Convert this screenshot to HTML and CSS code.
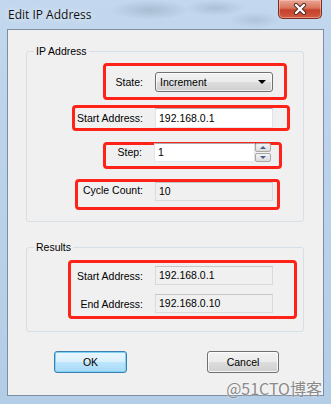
FILE: index.html
```html
<!DOCTYPE html>
<html lang="en">
<head>
    <meta charset="UTF-8">
    <meta name="viewport" content="width=device-width, initial-scale=1.0">
    <title>Edit IP Address</title>
    <link rel="stylesheet" href="styles.css">
</head>
<body>
    <div class="window">
        <div class="titlebar">
            <span class="title">Edit IP Address</span>
            <div class="close">
                <svg width="16" height="12" viewBox="0 0 16 12">
                    <path d="M4 2 L12 10 M12 2 L4 10" stroke="#4a2a22" stroke-width="4.2" stroke-linecap="round"/>
                    <path d="M4 2 L12 10 M12 2 L4 10" stroke="#ffffff" stroke-width="2.4" stroke-linecap="round"/>
                </svg>
            </div>
        </div>

        <div class="client">
            <div class="group group-ip">
                <div class="group-title">IP Address</div>

                <div class="mark mark-state">
                    <span class="label">State:</span>
                    <div class="combo">Increment<span class="arrow"></span></div>
                </div>

                <div class="mark mark-start">
                    <span class="label">Start Address:</span>
                    <div class="field">192.168.0.1</div>
                </div>

                <div class="mark mark-step">
                    <span class="label">Step:</span>
                    <div class="field field-step">1</div>
                    <div class="spin">
                        <span class="spin-btn"><span class="tri tri-up"></span></span>
                        <span class="spin-btn"><span class="tri tri-down"></span></span>
                    </div>
                </div>

                <div class="mark mark-cycle">
                    <span class="label">Cycle Count:</span>
                    <div class="field readonly">10</div>
                </div>
            </div>

            <div class="group group-results">
                <div class="group-title">Results</div>

                <div class="mark mark-results">
                    <div class="row">
                        <span class="label">Start Address:</span>
                        <div class="field readonly">192.168.0.1</div>
                    </div>
                    <div class="row">
                        <span class="label">End Address:</span>
                        <div class="field readonly">192.168.0.10</div>
                    </div>
                </div>
            </div>

            <div class="btns">
                <button class="btn btn-default">OK</button>
                <button class="btn btn-cancel">Cancel</button>
            </div>
        </div>

        <div class="watermark">@51CTO博客</div>
    </div>
</body>
</html>
```

FILE: styles.css
```css
* {
    margin: 0;
    padding: 0;
    box-sizing: border-box;
}

body {
    width: 331px;
    height: 404px;
    overflow: hidden;
    font-family: "Liberation Sans", Arial, sans-serif;
    font-size: 10.5px;
    color: #000;
}

.window {
    position: relative;
    display: flex;
    flex-direction: column;
    height: 404px;
    background:
        radial-gradient(ellipse 40px 10px at 150px 10px, rgba(120, 140, 160, 0.35), transparent),
        radial-gradient(ellipse 30px 8px at 215px 8px, rgba(120, 140, 160, 0.3), transparent),
        radial-gradient(ellipse 26px 8px at 255px 20px, rgba(120, 140, 160, 0.25), transparent),
        linear-gradient(180deg, #c3d8ee 0%, #bcd3eb 30%, #b4cde6 100%);
}

.titlebar {
    display: flex;
    height: 29px;
}

.title {
    padding: 7px 0 0 8px;
    font-family: "Open Sans", "Noto Sans", sans-serif;
    font-size: 12px;
    line-height: 15px;
    color: #111;
    text-shadow: 0 0 6px rgba(255, 255, 255, 0.9);
}

.close {
    display: flex;
    align-items: center;
    justify-content: center;
    width: 44px;
    height: 19px;
    margin-left: auto;
    margin-right: 9px;
    border: 1px solid #7b2d22;
    border-top: none;
    border-radius: 0 0 5px 5px;
    background: linear-gradient(180deg, #e9a897 0%, #d9735c 45%, #c4412b 55%, #d25a3f 100%);
    box-shadow: inset 0 0 0 1px rgba(255, 200, 190, 0.5);
}

.client {
    flex: 1;
    margin: 0 7px 8px 7px;
    border: 1px solid #7d8ea2;
    background-color: #f0f0f0;
}

.group {
    margin: 0 19px 0 18px;
    border: 1px solid #d5dfe5;
    border-radius: 3px;
}

.group-ip {
    margin-top: 21px;
    padding-bottom: 11px;
}

.group-results {
    margin-top: 25px;
    padding-bottom: 12px;
}

.group-title {
    width: max-content;
    margin: -7px 0 0 7px;
    padding: 0 2px;
    line-height: 13px;
    background-color: #f0f0f0;
}

.mark {
    display: flex;
    align-items: center;
    border: 3px solid #ff2218;
    border-radius: 4px;
}

.label {
    flex: 1;
    text-align: right;
    padding-right: 12px;
    white-space: nowrap;
}

.mark-state {
    margin: 5px 0 0 76px;
    width: 184px;
    height: 37px;
    padding-right: 11px;
}

.mark-start {
    margin: 5px 0 0 45px;
    width: 218px;
    height: 26px;
    padding-right: 14px;
}

.mark-step {
    margin: 11px 0 0 76px;
    width: 179px;
    height: 27px;
    padding-right: 8px;
    align-items: flex-start;
}

.mark-step .label,
.mark-step .field,
.mark-step .spin {
    margin-top: -2px;
}

.mark-step .label {
    line-height: 19px;
}

.mark-cycle {
    margin: 10px 0 0 48px;
    width: 205px;
    height: 31px;
    padding-right: 4px;
    align-items: flex-start;
}

.mark-cycle .label {
    line-height: 17px;
}

.mark-results {
    display: block;
    margin: 6px 0 0 41px;
    width: 229px;
    padding: 3px 21px 3px 0;
}

.row {
    display: flex;
    align-items: center;
}

.row + .row {
    margin-top: 9px;
}

.combo {
    position: relative;
    width: 118px;
    height: 20px;
    padding-left: 4px;
    line-height: 18px;
    border: 1px solid #707070;
    border-radius: 3px;
    background: linear-gradient(180deg, #f2f2f2 0%, #ebebeb 50%, #dddddd 51%, #cfcfcf 100%);
    box-shadow: inset 0 0 0 1px rgba(255, 255, 255, 0.7);
}

.arrow {
    position: absolute;
    right: 6px;
    top: 7px;
    border-left: 4px solid transparent;
    border-right: 4px solid transparent;
    border-top: 4px solid #000;
}

.field {
    width: 118px;
    height: 20px;
    padding-left: 3px;
    line-height: 18px;
    border: 1px solid #e2e3ea;
    border-top-color: #abadb3;
    border-bottom-color: #e3e9ef;
    background-color: #fff;
}

.field.readonly {
    height: 19px;
    line-height: 17px;
    border-color: #dadada;
    border-top-color: #c6c6c6;
    background-color: #f0f0f0;
}

.field-step {
    width: 101px;
    height: 19px;
    line-height: 17px;
}

.spin {
    display: flex;
    flex-direction: column;
    width: 16px;
    height: 19px;
    gap: 1px;
}

.spin-btn {
    display: flex;
    align-items: center;
    justify-content: center;
    flex: 1;
    border: 1px solid #a8a8a8;
    border-radius: 2px;
    background: linear-gradient(180deg, #f4f4f4, #dcdcdc);
}

.tri {
    border-left: 3px solid transparent;
    border-right: 3px solid transparent;
}

.tri-up {
    border-bottom: 3px solid #4c5f8c;
}

.tri-down {
    border-top: 3px solid #4c5f8c;
}

.btns {
    display: flex;
    margin-top: 19px;
    padding-left: 46px;
}

.btn {
    height: 22px;
    font-family: "Liberation Sans", Arial, sans-serif;
    font-size: 10.5px;
    color: #000;
    border-radius: 3px;
    cursor: pointer;
}

.btn-default {
    width: 73px;
    border: 1px solid #3c7fb1;
    background: linear-gradient(180deg, #eaf6fd 0%, #d9f0fc 50%, #bee6fd 51%, #a7d9f5 100%);
    box-shadow: inset 0 0 0 1px #7fd3f7;
}

.btn-cancel {
    width: 72px;
    margin-left: 80px;
    border: 1px solid #707070;
    background: linear-gradient(180deg, #f2f2f2 0%, #ebebeb 50%, #dddddd 51%, #cfcfcf 100%);
    box-shadow: inset 0 0 0 1px rgba(255, 255, 255, 0.8);
}

.watermark {
    position: absolute;
    right: 9px;
    bottom: 6px;
    font-family: "Noto Sans CJK SC", "Noto Sans", sans-serif;
    font-size: 16px;
    line-height: 20px;
    color: #8a8a8a;
    text-shadow: 0 0 2px rgba(255, 255, 255, 0.9);
}
```
